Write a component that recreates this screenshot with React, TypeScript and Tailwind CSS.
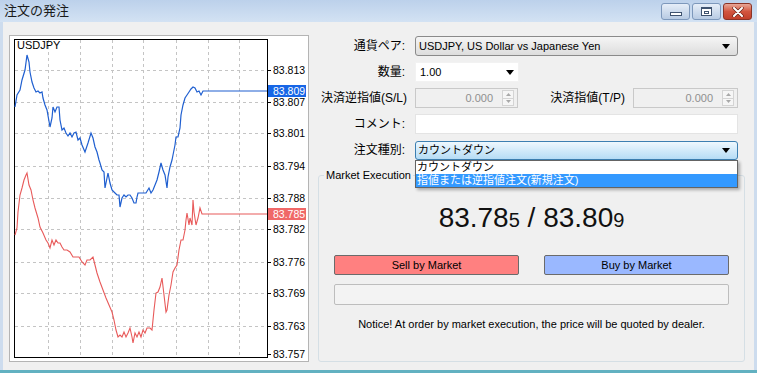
const font = "font-['Liberation_Sans','Noto_Sans_CJK_JP',sans-serif]"

const bluePts =
  '15,107 17,95 20,90 22,80 25,70 27,55 29,62 30,72 32,82 34,88 36,92 38,91 40,93 42,92 43,98 45,105 47,110 50,127 52,118 53,107 55,112 57,107 59,107 60,120 62,130 64,128 66,133 68,136 70,133 72,137 74,133 76,132 78,140 80,138 82,145 85,152 88,143 91,133 93,138 95,147 97,152 99,160 100,163 102,170 104,172 105,188 107,178 108,173 110,183 112,190 115,193 117,195 119,195 120,207 122,198 124,195 126,197 128,195 130,195 132,198 134,203 136,203 137,197 138,193 140,193 143,193 146,193 149,188 151,193 153,190 155,185 157,180 159,172 161,163 163,170 165,175 167,188 168,177 170,167 172,160 173,155 175,145 176,137 178,137 180,128 181,115 183,105 185,98 187,95 189,92 191,89 193,87 195,88 197,92 199,91 201,95 203,91 205,91 267,91'

const redPts =
  '15,235 17,228 18,212 20,195 22,188 24,180 26,175 27,173 29,185 31,190 33,200 35,208 38,218 40,227 43,233 46,240 48,243 50,248 52,240 54,245 56,240 58,243 60,243 62,247 64,250 67,250 70,252 73,257 76,257 79,257 82,262 85,265 87,260 90,260 93,257 95,265 97,273 100,282 103,290 106,298 109,305 112,312 114,320 116,330 118,337 120,335 122,337 124,332 126,337 128,333 130,328 132,337 133,343 135,333 137,337 139,332 141,337 143,330 145,333 147,328 150,328 152,330 154,310 156,293 158,292 160,287 162,278 164,295 166,312 167,310 169,295 171,285 173,272 175,268 177,265 179,250 181,240 183,240 185,230 186,220 187,213 189,225 190,218 192,225 193,200 194,212 196,225 198,218 200,208 202,214 267,214'

const gridX = [48, 80, 112, 143, 176, 208, 239]
const gridY = [70, 102, 133, 166, 198, 229, 262, 293, 326]
const axis = [
  ['83.813', 70],
  ['83.807', 102],
  ['83.801', 133],
  ['83.794', 166],
  ['83.788', 198],
  ['83.782', 229],
  ['83.776', 262],
  ['83.769', 293],
  ['83.763', 326],
  ['83.757', 354],
] as const

function Chart() {
  return (
    <div className="w-[300px] h-[327px] bg-white border border-[#b4b4b4] shrink-0">
      <svg width="298" height="325" viewBox="10 36 298 325" className="block">
        {gridX.map((x) => (
          <line key={x} x1={x + 0.5} y1={40} x2={x + 0.5} y2={357} stroke="#c4c4c4" strokeDasharray="3 3" />
        ))}
        {gridY.map((y) => (
          <line key={y} x1={15} y1={y + 0.5} x2={267} y2={y + 0.5} stroke="#c4c4c4" strokeDasharray="3 3" />
        ))}
        <rect x="14.5" y="39.5" width="253" height="318" fill="none" stroke="#000" />
        <polyline points={bluePts} fill="none" stroke="#1f5fd0" strokeWidth="1.2" />
        <polyline points={redPts} fill="none" stroke="#e85a5a" strokeWidth="1.1" />
        <text x="17" y="49" fontSize="11" fontFamily="Liberation Sans" fill="#000">
          USDJPY
        </text>
        {axis.map(([v, y]) => (
          <g key={v}>
            <line x1={267} y1={y + 0.5} x2={271} y2={y + 0.5} stroke="#000" />
            <text x="273" y={y + 4} fontSize="10.5" fontFamily="Liberation Sans" fill="#000">
              {v}
            </text>
          </g>
        ))}
        <rect x="268" y="85" width="38" height="12" fill="#1766e6" />
        <text x="273" y="95" fontSize="10.5" fontFamily="Liberation Sans" fill="#fff">
          83.809
        </text>
        <rect x="268" y="208" width="38" height="12" fill="#f06868" />
        <text x="273" y="218" fontSize="10.5" fontFamily="Liberation Sans" fill="#fff">
          83.785
        </text>
      </svg>
    </div>
  )
}

function Caret() {
  return (
    <svg width="8" height="5" viewBox="0 0 8 5">
      <path d="M0 0h8L4 5z" fill="#000" />
    </svg>
  )
}

function Spin() {
  return (
    <div className="flex flex-col w-[12px] h-[16px] mr-[3px] border border-[#d4d4d4] bg-[#f6f6f6]">
      <div className="flex-1 flex items-center justify-center border-b border-[#d4d4d4]">
        <svg width="5" height="3" viewBox="0 0 5 3">
          <path d="M2.5 0L5 3H0z" fill="#a8a8a8" />
        </svg>
      </div>
      <div className="flex-1 flex items-center justify-center">
        <svg width="5" height="3" viewBox="0 0 5 3">
          <path d="M0 0h5L2.5 3z" fill="#a8a8a8" />
        </svg>
      </div>
    </div>
  )
}

function Label({ children }: { children: React.ReactNode }) {
  return <div className="w-[89px] shrink-0 text-right text-[12px] leading-[14px] pr-[2px] text-black">{children}</div>
}

function Disabled({ w }: { w: string }) {
  return (
    <div className={`${w} h-[20px] border border-[#c9c9c9] bg-[#f0f0f0] flex items-center justify-end`}>
      <span className="text-[11px] text-[#8f8f8f] mr-[9px]">0.000</span>
      <Spin />
    </div>
  )
}

function TitleBar() {
  return (
    <div className="h-[22px] flex items-start bg-linear-to-b from-[#bcd1eb] to-[#d3e2f3]">
      <div className="pl-[4px] pt-[3px] text-[13px] leading-[16px] text-[#1a1a1a]">注文の発注</div>
      <div className="ml-auto mr-[5px] mt-[3px] flex gap-[2px]">
        <div className="w-[29px] h-[17px] rounded-[3px] border border-[#7d98bb] bg-linear-to-b from-[#e6eef8] to-[#b8cbe3] flex items-end justify-center pb-[3px]">
          <div className="w-[12px] h-[4px] bg-white border border-[#3f536f]" />
        </div>
        <div className="w-[29px] h-[17px] rounded-[3px] border border-[#7d98bb] bg-linear-to-b from-[#e6eef8] to-[#b8cbe3] flex items-center justify-center">
          <div className="w-[11px] h-[9px] bg-white border border-[#3f536f] border-t-2 flex items-center justify-center">
            <div className="w-[5px] h-[3px] border border-[#3f536f]" />
          </div>
        </div>
        <div className="w-[29px] h-[17px] rounded-[3px] border border-[#8b3326] bg-linear-to-b from-[#e7a798] via-[#d2553f] to-[#c2402b] flex items-center justify-center">
          <svg width="12" height="10" viewBox="0 0 12 10">
            <path d="M2 1l8 8M10 1l-8 8" stroke="#6b2418" strokeWidth="3.4" strokeLinecap="round" />
            <path d="M2 1l8 8M10 1l-8 8" stroke="#fff" strokeWidth="2" strokeLinecap="round" />
          </svg>
        </div>
      </div>
    </div>
  )
}

export default function App() {
  return (
    <div className={`w-[757px] h-[373px] overflow-hidden flex flex-col bg-[#cddcee] border-b-[3px] border-[#62b1c1] ${font}`}>
      <TitleBar />
      <div className="flex-1 mx-[3px] bg-[#f0f0f0] flex pl-[6px] pt-[13px]">
        <Chart />
        <div className="ml-[9px] w-[426px] flex flex-col">
          <div className="flex flex-col gap-[6px] pt-[1px]">
            <div className="flex items-center gap-[8px] h-[20px]">
              <Label>通貨ペア:</Label>
              <div className="w-[323px] h-[20px] rounded-[3px] border border-[#8a8a8a] bg-linear-to-b from-[#f5f5f5] to-[#dddddd] flex items-center pl-[3px] pr-[7px]">
                <span className="text-[11px] text-black">USDJPY, US Dollar vs Japanese Yen</span>
                <span className="ml-auto flex"><Caret /></span>
              </div>
            </div>
            <div className="flex items-center gap-[8px] h-[20px]">
              <Label>数量:</Label>
              <div className="w-[104px] h-[20px] bg-white border border-[#f2f2f2] flex items-center pl-[4px] pr-[4px]">
                <span className="text-[11px] text-black">1.00</span>
                <span className="ml-auto flex"><Caret /></span>
              </div>
            </div>
            <div className="flex items-center h-[20px]">
              <div className="w-[89px] shrink-0 text-right text-[12px] leading-[14px] text-black whitespace-nowrap">決済逆指値(S/L)</div>
              <div className="ml-[8px]"><Disabled w="w-[103px]" /></div>
              <div className="w-[107px] text-right text-[12px] leading-[14px] text-black whitespace-nowrap">決済指値(T/P)</div>
              <div className="ml-[8px]"><Disabled w="w-[105px]" /></div>
            </div>
            <div className="flex items-center gap-[8px] h-[20px]">
              <Label>コメント:</Label>
              <div className="w-[323px] h-[20px] bg-white border border-[#e4e4e4]" />
            </div>
            <div className="relative flex items-center gap-[8px] h-[20px]">
              <Label>注文種別:</Label>
              <div className="w-[323px] h-[19px] rounded-[3px] border border-[#3c7fb1] bg-linear-to-b from-[#eef8fe] to-[#b5dcf5] flex items-center pl-[2px] pr-[7px]">
                <span className="text-[11px] leading-[13px] text-black">カウントダウン</span>
                <span className="ml-auto flex"><Caret /></span>
              </div>
              <div className="absolute z-10 left-[97px] top-[20px] w-[323px] border border-[#646464] bg-white shadow-[2px_2px_3px_rgba(0,0,0,0.3)]">
                <div className="h-[13px] pl-[1px] text-[11px] leading-[13px] text-black">カウントダウン</div>
                <div className="h-[13px] pl-[1px] text-[11px] leading-[13px] text-white bg-[#3399ff]">指値または逆指値注文(新規注文)</div>
              </div>
            </div>
          </div>
          <fieldset className="mt-[8px] h-[194px] rounded-[3px] border border-[#d5dfe5]">
            <legend className="ml-[5px] px-[2px] text-[11px] leading-[14px] text-black">Market Execution</legend>
            <div className="mt-[20px] text-center leading-[32px] text-[#111]">
              <span className="text-[28px]">83.78</span>
              <span className="text-[20px]">5</span>
              <span className="text-[28px]"> / 83.80</span>
              <span className="text-[20px]">9</span>
            </div>
            <div className="mt-[17px] px-[15px] flex gap-[25px]">
              <div className="w-[185px] h-[20px] rounded-[2px] border border-[#6b6b6b] bg-[#ff8080] flex items-center justify-center text-[11px] text-black">
                Sell by Market
              </div>
              <div className="w-[185px] h-[20px] rounded-[2px] border border-[#6b6b6b] bg-[#9ab8ff] flex items-center justify-center text-[11px] text-black">
                Buy by Market
              </div>
            </div>
            <div className="mt-[9px] mx-[15px] h-[21px] rounded-[2px] border border-[#bdbdbd] bg-[#f3f3f3]" />
            <div className="mt-[12px] text-center text-[11px] leading-[14px] text-black">
              Notice! At order by market execution, the price will be quoted by dealer.
            </div>
          </fieldset>
        </div>
      </div>
    </div>
  )
}
